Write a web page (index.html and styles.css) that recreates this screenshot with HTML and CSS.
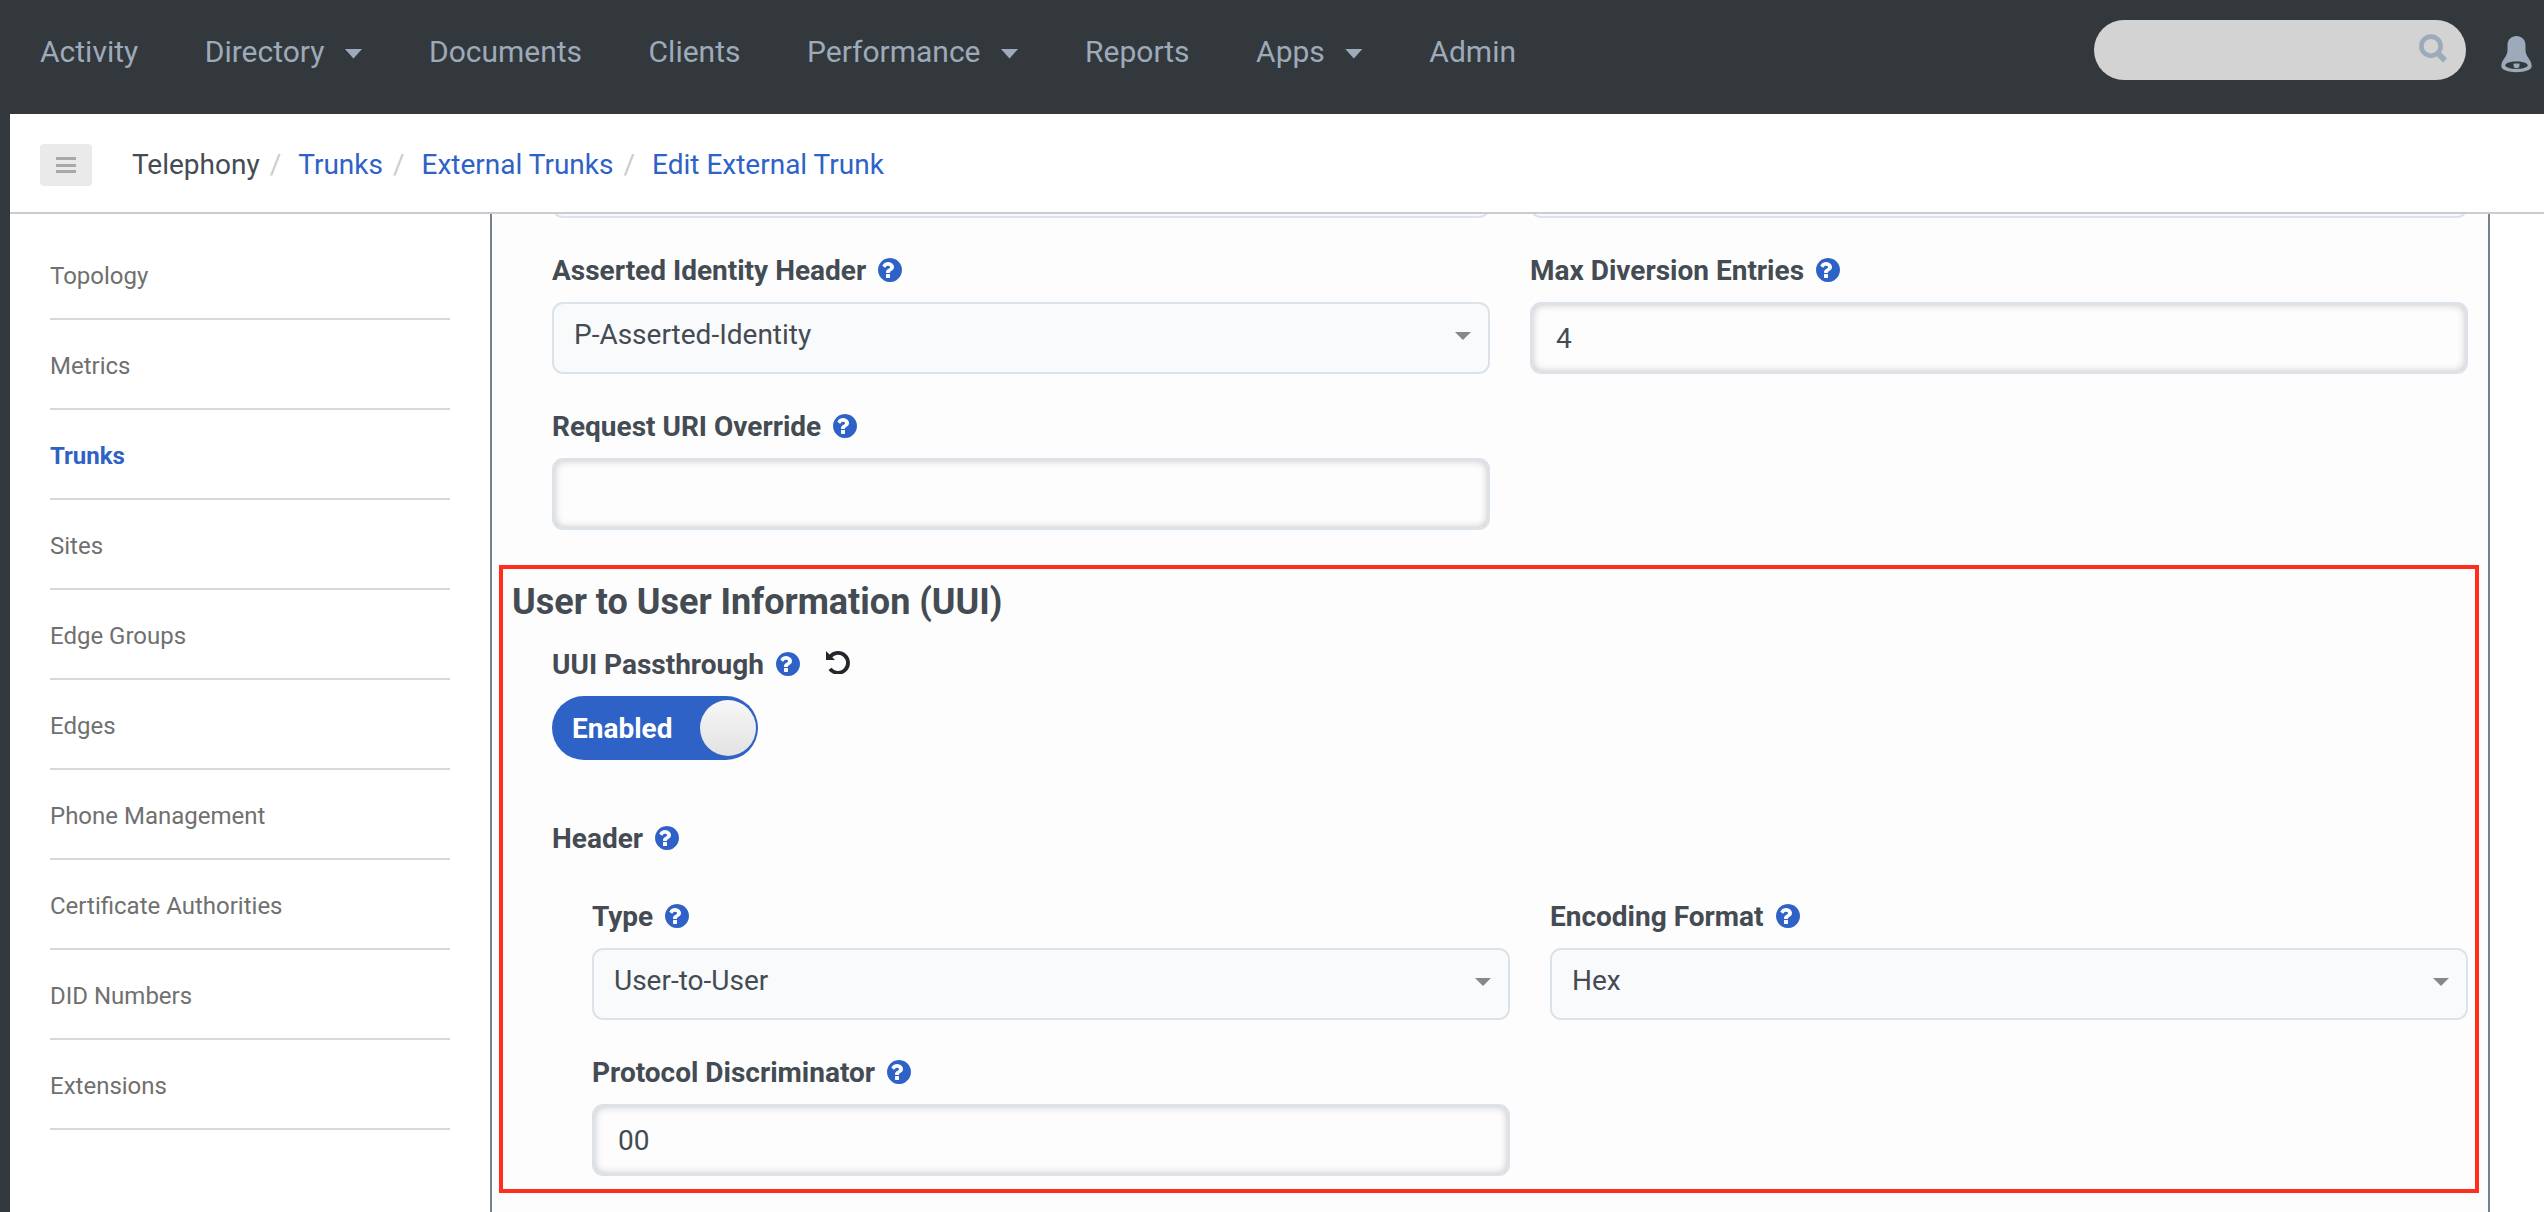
FILE: index.html
```html
<!DOCTYPE html>
<html lang="en">
<head>
<meta charset="utf-8">
<title>Edit External Trunk</title>
<link rel="stylesheet" href="styles.css">
</head>
<body>
<svg class="defs" width="0" height="0" aria-hidden="true">
  <symbol id="help" viewBox="128 128 1536 1536"><path d="M896 1376v-192q0-14-9-23t-23-9h-192q-14 0-23 9t-9 23v192q0 14 9 23t23 9h192q14 0 23-9t9-23zm256-672q0-88-55.5-163t-138.5-116-170-41q-243 0-371 213-15 24 8 42l132 100q7 6 19 6 16 0 25-12 53-68 86-92 34-24 86-24 48 0 85.5 26t37.5 59q0 38-20 61t-68 45q-63 28-115.5 86.5t-52.5 125.5v36q0 14 9 23t23 9h192q14 0 23-9t9-23q0-19 21.5-49.5t54.5-49.5q32-18 49-28.5t46-35 44.5-48 28-60.5 12.5-81zm512 192q0 209-103 385.5t-279.5 279.5-385.5 103-385.5-103-279.5-279.5-103-385.5 103-385.5 279.5-279.5 385.5-103 385.5 103 279.5 279.5 103 385.5z"/></symbol>
</svg>
<header class="topbar">
  <nav class="nav">
    <a>Activity</a>
    <a>Directory<i class="nav-caret"></i></a>
    <a>Documents</a>
    <a>Clients</a>
    <a>Performance<i class="nav-caret"></i></a>
    <a>Reports</a>
    <a>Apps<i class="nav-caret"></i></a>
    <a>Admin</a>
  </nav>
  <div class="search">
    <svg width="29" height="30" viewBox="0 0 29 30"><circle cx="12" cy="12.2" r="9.6" fill="none" stroke="#9caaba" stroke-width="4.6"/><path d="M18.500 18.800l7.500 7.700" fill="none" stroke="#9caaba" stroke-width="5.800"/></svg>
  </div>
  <svg class="bell" width="31" height="38" viewBox="0 0 31 38"><path fill="#9caaba" fill-rule="evenodd" d="M15.500 1c-5 0-9 3.500-9 9v5c0 7-6.200 9.500-6.200 16 0 4 7 6.200 15.200 6.200s15.200-2.200 15.200-6.200c0-6.500-6.200-9-6.200-16v-5c0-5.500-4-9-9-9zm0 25.500c6.500 0 11.200 1.700 11.200 3.700s-4.700 3.700-11.200 3.700-11.200-1.700-11.200-3.700 4.700-3.700 11.200-3.700z"/><path fill="#9caaba" d="M12.500 28.500h6v1.800a3 3 0 0 1-6 0z"/></svg>
</header>
<div class="page">
  <div class="crumbs">
    <button class="menu"><i></i><i></i><i></i></button>
    <ol>
      <li>Telephony</li>
      <li><a>Trunks</a></li>
      <li><a>External Trunks</a></li>
      <li><a>Edit External Trunk</a></li>
    </ol>
  </div>
  <div class="body">
    <ul class="side">
      <li>Topology</li>
      <li>Metrics</li>
      <li class="active">Trunks</li>
      <li>Sites</li>
      <li>Edge Groups</li>
      <li>Edges</li>
      <li>Phone Management</li>
      <li>Certificate Authorities</li>
      <li>DID Numbers</li>
      <li>Extensions</li>
    </ul>
    <main class="panel">
      <div class="grid">
        <div class="box select tail"></div>
        <div class="box select tail"></div>
        <div class="field">
          <label>Asserted Identity Header<svg class="help"><use href="#help"/></svg></label>
          <div class="box select">P-Asserted-Identity<i class="caret"></i></div>
        </div>
        <div class="field">
          <label>Max Diversion Entries<svg class="help"><use href="#help"/></svg></label>
          <div class="box input">4</div>
        </div>
        <div class="field">
          <label>Request URI Override<svg class="help"><use href="#help"/></svg></label>
          <div class="box input"></div>
        </div>
      </div>
      <section class="uui">
        <h2>User to User Information (UUI)</h2>
        <div class="uui-body">
          <label>UUI Passthrough<svg class="help"><use href="#help"/></svg><svg class="undo" viewBox="0 0 24 24"><path d="M4.200 6.600A10 10 0 1 1 4 18.800" fill="none" stroke="#23272b" stroke-width="3.800"/><path d="M0 1v9h9z" fill="#23272b"/></svg></label>
          <div class="toggle"><span>Enabled</span><i></i></div>
          <label class="header-label">Header<svg class="help"><use href="#help"/></svg></label>
          <div class="grid nested">
            <div class="field">
              <label>Type<svg class="help"><use href="#help"/></svg></label>
              <div class="box select">User-to-User<i class="caret"></i></div>
            </div>
            <div class="field">
              <label>Encoding Format<svg class="help"><use href="#help"/></svg></label>
              <div class="box select">Hex<i class="caret"></i></div>
            </div>
            <div class="field">
              <label>Protocol Discriminator<svg class="help"><use href="#help"/></svg></label>
              <div class="box input">00</div>
            </div>
          </div>
        </div>
      </section>
    </main>
  </div>
</div>
</body>
</html>
```

FILE: styles.css
```css
* { box-sizing: border-box; }
body {
  margin: 0;
  height: 1212px;
  overflow: hidden;
  background: #33383c;
  color: #444b53;
  font: 28px/38px Roboto, "Liberation Sans", sans-serif;
}
.defs { position: absolute; }
svg { display: block; flex: none; }

/* Top bar */
.topbar {
  display: flex;
  align-items: flex-start;
  height: 114px;
  padding-right: 12px;
}
.nav {
  display: flex;
  flex: 1;
  gap: 66.5px;
  padding: 34px 0 0 40px;
  color: #9caaba;
  font-size: 30px;
  line-height: 36px;
}
.nav a { display: flex; align-items: center; }
.nav-caret {
  width: 18px;
  height: 10px;
  margin: 3px 0 0 20px;
  background: #9caaba;
  clip-path: polygon(0 0, 100% 0, 50% 100%);
}
.search {
  display: flex;
  justify-content: flex-end;
  width: 372px;
  height: 60px;
  margin: 20px 35px 0 0;
  padding: 14px 18px 0 0;
  border-radius: 30px;
  background: #d3d3d3;
}
.bell { margin-top: 35px; }

/* Breadcrumbs */
.page { margin-left: 10px; background: #fff; height: 1098px; }
.crumbs {
  display: flex;
  align-items: flex-start;
  height: 100px;
  padding: 30px 0 0 30px;
  border-bottom: 2px solid #ccc;
}
.menu {
  display: flex;
  flex-direction: column;
  align-items: center;
  justify-content: center;
  gap: 3.5px;
  width: 52px;
  height: 42px;
  padding: 0;
  border: 0;
  border-radius: 4px;
  background: #eaeaea;
}
.menu i { width: 20px; height: 3px; background: #a9a9a9; }
.crumbs ol {
  display: flex;
  margin: 2px 0 0 40px;
  padding: 0;
  list-style: none;
}
.crumbs li { display: flex; }
.crumbs li + li::before { content: "/"; padding: 0 17px 0 10px; color: #ccc; }
.crumbs a { color: #2e62c6; }

/* Sidebar */
.body { display: flex; height: 998px; overflow: hidden; }
.side {
  width: 400px;
  margin: 16px 40px 0;
  padding: 0;
  list-style: none;
  color: #707070;
  font-size: 24px;
  line-height: 36px;
}
.side li { height: 90px; padding-top: 28px; border-bottom: 2px solid #d8d8d8; }
.side .active { color: #2e62c6; font-weight: 700; }

/* Settings panel */
.panel {
  width: 2000px;
  border: solid #75828e;
  border-width: 0 2px;
  background: #fdfdfd;
}
.grid {
  display: grid;
  grid-template-columns: 1fr 1fr;
  gap: 34px 40px;
  padding: 0 20px 0 60px;
}
label, h2 { display: flex; font-weight: 700; }
.field { display: flex; flex-direction: column; gap: 12px; }
.help { width: 24px; height: 24px; margin: 6px 0 0 12px; fill: #2e62c6; }
.box {
  display: flex;
  justify-content: space-between;
  height: 72px;
  border: 2px solid #dbe2ea;
  border-radius: 11px;
}
.select { padding: 12px 17px 0 20px; background: #f9fafc; }
.input { padding: 16px 24px 0; box-shadow: inset 0 0 8px rgba(0, 0, 0, .25); }
.tail { margin-top: -68px; }
.caret {
  width: 16px;
  height: 8px;
  margin-top: 16px;
  background: #888;
  clip-path: polygon(0 0, 100% 0, 50% 100%);
}

/* User to User Information */
.uui {
  height: 628px;
  margin: 35px 9px 0 7px;
  border: 4px solid #ff2d1a;
}
h2 { margin: 12px 0 0 9px; font-size: 36px; line-height: 42px; }
.uui-body { padding: 23px 7px 0 49px; }
.undo { width: 24px; height: 24px; margin: 4px 0 0 26px; }
.toggle {
  display: flex;
  align-items: center;
  justify-content: space-between;
  width: 206px;
  height: 64px;
  margin-top: 12px;
  padding: 0 2px 0 20px;
  border-radius: 32px;
  background: #2e62c6;
  color: #fff;
  font-weight: 700;
}
.toggle span { padding-top: 2px; }
.toggle i {
  width: 56px;
  height: 56px;
  border-radius: 50%;
  background: linear-gradient(#f7f7f7, #e2e2e2);
}
.header-label { margin-top: 60px; }
.nested { margin-top: 40px; padding: 0 0 0 40px; }
```
